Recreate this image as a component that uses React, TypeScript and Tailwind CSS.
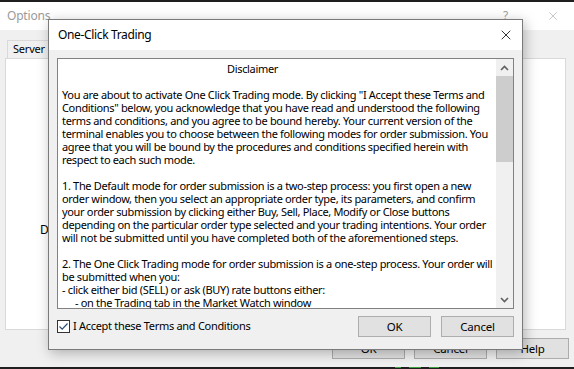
import { X } from "lucide-react";

const font = { fontFamily: '"Noto Sans", "Open Sans", sans-serif' };

const intro = [
  'You are about to activate One Click Trading mode. By clicking "I Accept these Terms and',
  'Conditions" below, you acknowledge that you have read and understood the following',
  "terms and conditions, and you agree to be bound hereby. Your current version of the",
  "terminal enables you to choose between the following modes for order submission. You",
  "agree that you will be bound by the procedures and conditions specified herein with",
  "respect to each such mode.",
];

const para1 = [
  "1. The Default mode for order submission is a two-step process: you first open a new",
  "order window, then you select an appropriate order type, its parameters, and confirm",
  "your order submission by clicking either Buy, Sell, Place, Modify or Close buttons",
  "depending on the particular order type selected and your trading intentions. Your order",
  "will not be submitted until you have completed both of the aforementioned steps.",
];

const para2 = [
  "2. The One Click Trading mode for order submission is a one-step process. Your order will",
  "be submitted when you:",
  "- click either bid (SELL) or ask (BUY) rate buttons either:",
];

function Lines({ lines }: { lines: string[] }) {
  return (
    <>
      {lines.map((l, i) => (
        <div key={i} className="whitespace-pre h-[13px]">
          {l}
        </div>
      ))}
    </>
  );
}

function WinButton({ label, className = "" }: { label: string; className?: string }) {
  return (
    <div
      className={`h-[21px] w-[73px] bg-[#e1e1e1] border border-[#adadad] flex items-center justify-center text-[11.5px] tracking-[-0.2px] text-black ${className}`}
    >
      {label}
    </div>
  );
}

export default function App() {
  return (
    <div className="relative w-[574px] h-[369px] overflow-hidden bg-[#f0f0f0] text-black" style={font}>
      {/* desktop strip top */}
      <div className="h-[2px] bg-[#1f1f1f]" />

      {/* background Options window */}
      <div className="h-[28px] bg-white flex items-center pl-[7px] pr-[14px] text-[12px] tracking-[-0.2px] text-[#9a9a9a]">
        <span>Options</span>
        <span className="ml-auto mr-[38px] text-[12px] text-[#a0a0a0]">?</span>
        <X size={14} strokeWidth={1} className="text-[#a0a0a0]" />
      </div>
      <div className="px-[5px] pt-[10px] h-[337px] flex flex-col">
        <div className="flex">
          <div className="ml-[2px] h-[18px] w-[42px] pl-[5px] bg-[#f0f0f0] border border-b-0 border-[#d9d9d9] text-[11px] tracking-[-0.2px] leading-[16px]">
            Server
          </div>
        </div>
        <div className="h-[272px] w-[561px] bg-white border border-[#d9d9d9] pl-[34px] pt-[157px]">
          <span className="text-[12px] tracking-[-0.2px]">De</span>
        </div>
        <div className="flex gap-[9px] pl-[327px] pt-[8px]">
          <WinButton label="OK" />
          <WinButton label="Cancel" />
          <WinButton label="Help" />
        </div>
      </div>
      <div className="h-[2px] bg-[#1f1f1f] flex pl-[395px] gap-[8px]">
        <div className="w-[6px] h-[1px] bg-[#3f9b3f]" />
        <div className="w-[12px] h-[1px] bg-[#3f9b3f]" />
        <div className="w-[10px] h-[1px] bg-[#3f9b3f]" />
      </div>

      {/* One-Click Trading dialog */}
      <div className="absolute left-[48px] top-[19px] w-[475px] h-[331px] bg-[#f0f0f0] border border-[#7a7a7a] shadow-[2px_3px_12px_rgba(0,0,0,0.28)] flex flex-col">
        <div className="h-[30px] bg-white flex items-center pl-[9px] pr-[8px] shrink-0">
          <span className="text-[12px] tracking-[-0.35px]">One-Click Trading</span>
          <X size={16} strokeWidth={1.2} className="ml-auto text-black" />
        </div>
        <div className="px-[8px] pt-[8px]">
          <div className="h-[251px] bg-white border border-[#828282] flex overflow-hidden">
            <div className="flex-1 pl-[4px] pt-[3px] text-[11px] tracking-[-0.33px] leading-[13px] overflow-hidden">
              <div className="h-[13px] pl-[165px]">Disclaimer</div>
              <div className="h-[13px]" />
              <Lines lines={intro} />
              <div className="h-[13px]" />
              <Lines lines={para1} />
              <div className="h-[13px]" />
              <Lines lines={para2} />
              <div className="whitespace-pre h-[13px] pl-[13px]">- on the Trading tab in the Market Watch window</div>
            </div>
            <div className="w-[17px] bg-[#f0f0f0] flex flex-col items-center shrink-0">
              <div className="h-[17px] flex items-center justify-center">
                <svg width="9" height="6" viewBox="0 0 9 6">
                  <path d="M1 5 L4.5 1.5 L8 5" fill="none" stroke="#606060" strokeWidth="1.6" />
                </svg>
              </div>
              <div className="h-[86px] w-[17px] bg-[#cdcdcd]" />
              <div className="flex-1" />
              <div className="h-[17px] flex items-center justify-center">
                <svg width="9" height="6" viewBox="0 0 9 6">
                  <path d="M1 1 L4.5 4.5 L8 1" fill="none" stroke="#606060" strokeWidth="1.6" />
                </svg>
              </div>
            </div>
          </div>
          <div className="flex items-center pt-[7px]">
            <div className="w-[13px] h-[13px] border border-[#333] bg-white flex items-center justify-center">
              <svg width="11" height="11" viewBox="0 0 11 11">
                <path d="M1.5 5.5 L4.2 8.2 L9.5 2.5" fill="none" stroke="#2b4e79" strokeWidth="1.2" />
              </svg>
            </div>
            <span className="ml-[3px] text-[11px] tracking-[-0.3px]">I Accept these Terms and Conditions</span>
            <WinButton label="OK" className="ml-auto" />
            <WinButton label="Cancel" className="ml-[10px]" />
          </div>
        </div>
      </div>
    </div>
  );
}
